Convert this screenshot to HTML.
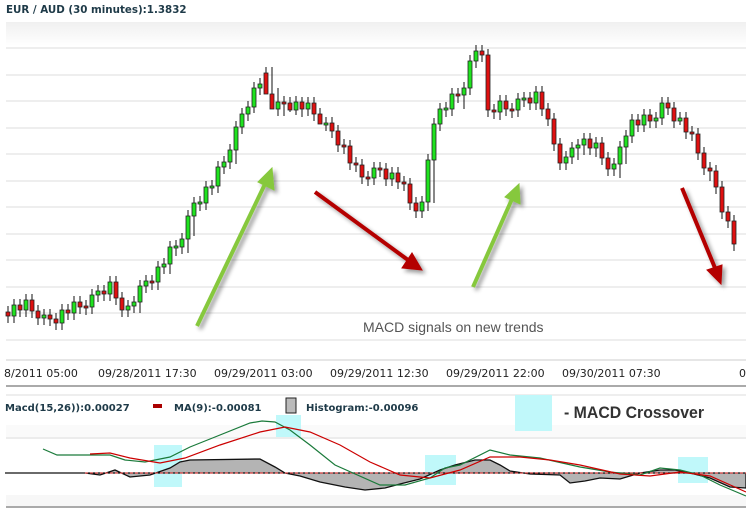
<!DOCTYPE html>
<html><head><meta charset="utf-8"><style>
html,body{margin:0;padding:0;background:#fff;width:746px;height:515px;overflow:hidden}
svg{display:block}
</style></head><body>
<svg width="746" height="515" xmlns="http://www.w3.org/2000/svg" font-family="Liberation Sans, sans-serif">
<defs>
<linearGradient id="tg" x1="0" y1="0" x2="0" y2="1"><stop offset="0" stop-color="#f0f0f0"/><stop offset="1" stop-color="#fff"/></linearGradient>
<filter id="sh" x="-20%" y="-20%" width="140%" height="140%"><feGaussianBlur in="SourceAlpha" stdDeviation="2"/><feOffset dx="3" dy="3"/><feComponentTransfer><feFuncA type="linear" slope="0.4"/></feComponentTransfer><feMerge><feMergeNode/><feMergeNode in="SourceGraphic"/></feMerge></filter>
</defs>
<text x="6" y="13" font-size="10.3" font-weight="bold" fill="#1e3a48" font-family="DejaVu Sans, sans-serif">EUR / AUD (30 minutes):1.3832</text>
<rect x="6" y="22" width="740" height="24" fill="url(#tg)"/>
<g stroke="#dcdcdc" stroke-width="1">
<line x1="6" x2="746" y1="48" y2="48"/><line x1="6" x2="746" y1="75" y2="75"/><line x1="6" x2="746" y1="101" y2="101"/><line x1="6" x2="746" y1="128" y2="128"/><line x1="6" x2="746" y1="154" y2="154"/><line x1="6" x2="746" y1="181" y2="181"/><line x1="6" x2="746" y1="207" y2="207"/><line x1="6" x2="746" y1="234" y2="234"/><line x1="6" x2="746" y1="260" y2="260"/><line x1="6" x2="746" y1="287" y2="287"/><line x1="6" x2="746" y1="313" y2="313"/><line x1="6" x2="746" y1="340" y2="340"/>
</g>
<path fill="none" stroke="#111" stroke-width="1" d="M8 306V323M14 299V323M20 299V317M26 294V317M32 294V318M38 305V325M44 309V325M50 309V326M56 313V330M62 304V330M68 304V320M74 296V320M80 296V314M86 300V315M92 289V314M98 285V302M104 285V301M110 276V301M116 276V305M122 292V317M128 300V317M134 296V313M140 280V313M146 275V293M152 275V290M158 261V290M164 258V274M170 241V274M176 240V256M182 233V254M188 210V253M194 197V236M200 196V211M206 181V210M212 180V195M218 161V193M224 156V174M230 144V169M236 121V164M242 108V134M248 101V121M254 82V113M260 78V95M266 67V91M272 67V101M278 88V116M284 96V116M290 97V112M296 96V115M302 97V117M308 97V116M314 97V121M320 108V124M326 117V131M332 117V138M338 125V152M344 139V154M350 140V170M356 157V172M362 159V184M368 171V186M374 162V185M380 162V177M386 163V186M392 167V186M398 167V189M404 176V191M410 178V210M416 197V218M422 196V218M428 154V211M434 118V203M440 103V131M446 102V117M452 88V116M458 88V103M464 82V109M470 55V95M476 45V68M482 45V62M488 49V117M494 104V119M500 95V120M506 95V116M512 103V118M518 93V117M524 92V107M530 92V110M536 86V110M542 86V116M548 103V126M554 113V151M560 138V170M566 151V170M572 142V164M578 139V160M584 133V155M590 133V155M596 137V157M602 137V165M608 152V176M614 158V176M620 141V178M626 130V164M632 114V143M638 114V132M644 109V132M650 109V128M656 112V128M662 97V125M668 97V115M674 102V128M680 112V125M686 112V139M692 126V141M698 128V160M704 147V175M710 162V181M716 165V194M722 181V219M728 206V228M734 215V251"/>
<g stroke="#222" stroke-width="0.8" fill="#e01010">
<rect x="6" y="312" width="4" height="4"/><rect x="18" y="305" width="4" height="5"/><rect x="30" y="300" width="4" height="11"/><rect x="36" y="311" width="4" height="7"/><rect x="48" y="315" width="4" height="4"/><rect x="54" y="319" width="4" height="4"/><rect x="66" y="310" width="4" height="3"/><rect x="78" y="302" width="4" height="5"/><rect x="84" y="306" width="4" height="2"/><rect x="102" y="291" width="4" height="3"/><rect x="114" y="282" width="4" height="16"/><rect x="120" y="298" width="4" height="12"/><rect x="150" y="281" width="4" height="2"/><rect x="264" y="73" width="4" height="21"/><rect x="270" y="94" width="4" height="15"/><rect x="282" y="102" width="4" height="2"/><rect x="288" y="103" width="4" height="7"/><rect x="300" y="102" width="4" height="7"/><rect x="312" y="103" width="4" height="11"/><rect x="318" y="114" width="4" height="10"/><rect x="330" y="123" width="4" height="8"/><rect x="336" y="131" width="4" height="14"/><rect x="342" y="145" width="4" height="2"/><rect x="348" y="146" width="4" height="17"/><rect x="354" y="163" width="4" height="2"/><rect x="360" y="165" width="4" height="12"/><rect x="366" y="177" width="4" height="2"/><rect x="378" y="168" width="4" height="2"/><rect x="384" y="169" width="4" height="10"/><rect x="396" y="173" width="4" height="9"/><rect x="402" y="182" width="4" height="2"/><rect x="408" y="184" width="4" height="19"/><rect x="414" y="203" width="4" height="8"/><rect x="456" y="94" width="4" height="2"/><rect x="480" y="51" width="4" height="4"/><rect x="486" y="55" width="4" height="55"/><rect x="492" y="110" width="4" height="2"/><rect x="504" y="101" width="4" height="8"/><rect x="510" y="109" width="4" height="2"/><rect x="528" y="98" width="4" height="5"/><rect x="540" y="92" width="4" height="17"/><rect x="546" y="109" width="4" height="10"/><rect x="552" y="119" width="4" height="25"/><rect x="558" y="144" width="4" height="19"/><rect x="588" y="139" width="4" height="9"/><rect x="600" y="143" width="4" height="15"/><rect x="606" y="158" width="4" height="11"/><rect x="636" y="120" width="4" height="5"/><rect x="648" y="115" width="4" height="6"/><rect x="666" y="103" width="4" height="5"/><rect x="672" y="108" width="4" height="13"/><rect x="684" y="118" width="4" height="14"/><rect x="690" y="132" width="4" height="2"/><rect x="696" y="134" width="4" height="19"/><rect x="702" y="153" width="4" height="15"/><rect x="708" y="168" width="4" height="3"/><rect x="714" y="171" width="4" height="16"/><rect x="720" y="187" width="4" height="25"/><rect x="726" y="212" width="4" height="9"/><rect x="732" y="221" width="4" height="23"/>
</g>
<g stroke="#222" stroke-width="0.8" fill="#1fe31f">
<rect x="12" y="305" width="4" height="11"/><rect x="24" y="300" width="4" height="10"/><rect x="42" y="315" width="4" height="3"/><rect x="60" y="310" width="4" height="13"/><rect x="72" y="302" width="4" height="11"/><rect x="90" y="295" width="4" height="12"/><rect x="96" y="291" width="4" height="4"/><rect x="108" y="282" width="4" height="12"/><rect x="126" y="306" width="4" height="4"/><rect x="132" y="302" width="4" height="4"/><rect x="138" y="286" width="4" height="16"/><rect x="144" y="281" width="4" height="5"/><rect x="156" y="267" width="4" height="15"/><rect x="162" y="264" width="4" height="3"/><rect x="168" y="247" width="4" height="17"/><rect x="174" y="246" width="4" height="2"/><rect x="180" y="239" width="4" height="8"/><rect x="186" y="216" width="4" height="23"/><rect x="192" y="203" width="4" height="13"/><rect x="198" y="202" width="4" height="2"/><rect x="204" y="187" width="4" height="16"/><rect x="210" y="186" width="4" height="2"/><rect x="216" y="167" width="4" height="19"/><rect x="222" y="162" width="4" height="5"/><rect x="228" y="150" width="4" height="12"/><rect x="234" y="127" width="4" height="23"/><rect x="240" y="114" width="4" height="13"/><rect x="246" y="107" width="4" height="7"/><rect x="252" y="88" width="4" height="19"/><rect x="258" y="84" width="4" height="4"/><rect x="276" y="102" width="4" height="7"/><rect x="294" y="102" width="4" height="8"/><rect x="306" y="103" width="4" height="6"/><rect x="324" y="123" width="4" height="2"/><rect x="372" y="168" width="4" height="10"/><rect x="390" y="173" width="4" height="6"/><rect x="420" y="202" width="4" height="9"/><rect x="426" y="160" width="4" height="42"/><rect x="432" y="124" width="4" height="36"/><rect x="438" y="109" width="4" height="15"/><rect x="444" y="108" width="4" height="2"/><rect x="450" y="94" width="4" height="15"/><rect x="462" y="88" width="4" height="7"/><rect x="468" y="61" width="4" height="27"/><rect x="474" y="51" width="4" height="10"/><rect x="498" y="101" width="4" height="11"/><rect x="516" y="99" width="4" height="11"/><rect x="522" y="98" width="4" height="2"/><rect x="534" y="92" width="4" height="11"/><rect x="564" y="157" width="4" height="6"/><rect x="570" y="148" width="4" height="9"/><rect x="576" y="145" width="4" height="3"/><rect x="582" y="139" width="4" height="6"/><rect x="594" y="143" width="4" height="5"/><rect x="612" y="164" width="4" height="5"/><rect x="618" y="147" width="4" height="17"/><rect x="624" y="136" width="4" height="11"/><rect x="630" y="120" width="4" height="16"/><rect x="642" y="115" width="4" height="10"/><rect x="654" y="118" width="4" height="3"/><rect x="660" y="103" width="4" height="15"/><rect x="678" y="118" width="4" height="3"/>
</g>
<line x1="6" y1="386" x2="746" y2="386" stroke="#aaa" stroke-width="2"/>
<line x1="6" y1="360" x2="746" y2="360" stroke="#ccc"/>
<g font-size="11" fill="#222" font-family="DejaVu Sans, sans-serif">
<text x="4" y="377">8/2011 05:00</text>
<text x="98" y="377">09/28/2011 17:30</text>
<text x="214" y="377">09/29/2011 03:00</text>
<text x="330" y="377">09/29/2011 12:30</text>
<text x="446" y="377">09/29/2011 22:00</text>
<text x="562" y="377">09/30/2011 07:30</text>
<text x="739" y="377">0</text>
</g>
<text x="363" y="332" font-size="14" fill="#555">MACD signals on new trends</text>
<g filter="url(#sh)">
<g stroke="#86c83e" fill="#86c83e" stroke-width="4"><line x1="197" y1="326" x2="265" y2="184"/><polygon points="272,168 274,190 258,182" stroke-width="1"/>
<line x1="473" y1="287" x2="512" y2="199"/><polygon points="519,184 520,204 505,197" stroke-width="1"/></g>
<g stroke="#b40000" fill="#b40000" stroke-width="4"><line x1="315" y1="192" x2="408" y2="260"/><polygon points="422,270 402,268 412,253" stroke-width="1"/>
<line x1="682" y1="188" x2="715" y2="268"/><polygon points="721,284 707,270 722,265" stroke-width="1"/></g>
</g>
<line x1="6" y1="395" x2="746" y2="395" stroke="#ddd"/>
<rect x="6" y="425" width="740" height="14" fill="#fafafa"/>
<line x1="6" y1="438" x2="746" y2="438" stroke="#ddd"/>
<rect x="6" y="495" width="740" height="12" fill="#f7f7f7"/>
<line x1="6" y1="507" x2="746" y2="507" stroke="#aaa" stroke-width="2"/>
<g font-size="10" font-weight="bold" fill="#1e3a48" font-family="DejaVu Sans, sans-serif">
<text x="5" y="411">Macd(15,26)):0.00027</text>
<rect x="153" y="404" width="9" height="4" fill="#a00"/>
<text x="174" y="411">MA(9):-0.00081</text>
<rect x="286" y="398" width="10" height="15" fill="#bbb" stroke="#222"/>
<text x="306" y="411">Histogram:-0.00096</text>
</g>
<rect x="515" y="395" width="37" height="36" fill="#c0f8fa"/>
<text x="564" y="418" font-size="17" font-weight="bold" fill="#333" textLength="140" lengthAdjust="spacingAndGlyphs">- MACD Crossover</text>
<g fill="#c0f8fa"><rect x="154" y="445" width="28" height="42"/><rect x="276" y="415" width="25" height="22"/><rect x="425" y="455" width="31" height="30"/><rect x="678" y="457" width="30" height="26"/></g>
<polygon fill="#b4b4b4" stroke="#111" stroke-width="1.3" points="85,473 100,475 115,470 130,477 150,475 170,468 180,462 190,460 260,459 275,467 285,473 300,476 320,482 345,487 365,490 385,488 400,484 420,479 440,470 455,465 475,460 490,460 500,465 510,471 530,474 560,475 570,483 585,481 600,478 620,479 640,473 660,470 675,470 690,473 710,478 730,487 746,488 746,473"/>
<line x1="5" y1="473" x2="85" y2="473" stroke="#111" stroke-width="1.3"/>
<line x1="85" y1="473" x2="746" y2="473" stroke="#f44" stroke-dasharray="3,2"/>
<polyline fill="none" stroke="#1a7a3a" stroke-width="1.2" points="43,449 57,455 90,455 110,455 125,460 145,462 170,457 190,447 215,437 250,423 262,421 275,422 290,430 310,445 335,465 380,485 405,485 430,478 445,468 460,465 490,450 510,455 540,458 580,467 610,472 640,475 660,468 680,470 700,475 720,485 746,496"/>
<polyline fill="none" stroke="#c00" stroke-width="1.2" points="90,454 110,453 130,458 160,463 185,458 220,445 260,432 285,427 310,432 340,445 370,462 400,475 430,478 460,470 490,457 520,457 550,460 580,465 620,474 650,476 680,472 710,476 746,492"/>
</svg>
</body></html>
